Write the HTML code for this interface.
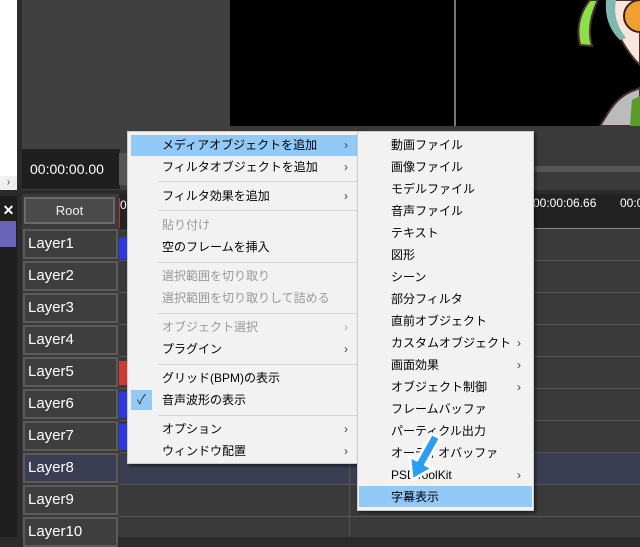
<!DOCTYPE html>
<html><head><meta charset="utf-8"><style>
*{margin:0;padding:0;box-sizing:border-box}
body{width:640px;height:537px;overflow:hidden;background:#2b2b2b;position:relative;font-family:"Liberation Sans","Noto Sans CJK JP",sans-serif}
.a{position:absolute}
.lay{position:absolute;left:23px;width:95px;height:30px;background:#3e3e3e;border:2px solid #5a5a5a;color:#fff;font-size:15px;line-height:26px;padding-left:3px}
.hl{position:absolute;left:119px;width:521px;height:1px;background:#555}
.m{position:absolute;background:#f2f2f2;border:1px solid #ccc;box-shadow:2px 2px 3px rgba(0,0,0,.5);font-size:12px;color:#000}
.it{position:absolute;height:22px;line-height:22px;white-space:nowrap}
.dis{color:#999}
.ar{position:absolute;font-size:12px;line-height:22px;color:#444}
.sep{position:absolute;height:1px;background:#d5d5d5}
</style></head><body>
<div class="a" style="left:0;top:0;width:17px;height:176px;background:#fff"></div>
<div class="a" style="left:0;top:176px;width:17px;height:14px;background:#f0f0f0;font-size:10px;color:#444;text-align:center;line-height:14px">›</div>
<div class="a" style="left:0;top:196px;width:17px;height:341px;background:#1e1e1e"></div>
<div class="a" style="left:0;top:200px;width:17px;height:20px;color:#fff;font-size:14px;font-weight:bold;line-height:20px;text-align:center">✕</div>
<div class="a" style="left:0;top:221px;width:16px;height:26px;background:#6a64b8"></div>
<div class="a" style="left:22px;top:0;width:208px;height:190px;background:#404040"></div>
<div class="a" style="left:230px;top:0;width:410px;height:126px;background:#000"></div>
<div class="a" style="left:454px;top:0;width:2px;height:126px;background:#777"></div>
<svg class="a" style="left:560px;top:0" width="80" height="126">
<path d="M30 0 Q14 20 20 45 L32 46 Q26 25 38 0Z" fill="#8ee04a" stroke="#4a3030" stroke-width="2"/>
<path d="M52 0 Q50 30 75 60 L80 65 L80 0Z" fill="#f8e6dc" stroke="#4a3030" stroke-width="2"/>
<path d="M46 0 Q44 25 60 40 L66 38 Q52 20 56 0Z" fill="#7fb8b0"/>
<circle cx="80" cy="16" r="16" fill="#f0a030" stroke="#3a2020" stroke-width="2"/>
<path d="M50 110 Q60 95 75 90 L80 88 L80 126 L40 126Z" fill="#bbb" stroke="#4a3030" stroke-width="2"/>
<path d="M72 100 L80 96 L80 126 L70 126Z" fill="#5a9a2a"/>
</svg>
<div class="a" style="left:230px;top:126px;width:410px;height:64px;background:#3a3a3a"></div>
<div class="a" style="left:533px;top:166px;width:107px;height:6px;background:#555"></div>
<div class="a" style="left:22px;top:149px;width:98px;height:40px;background:#1f1f1f;color:#fff;font-size:14px;line-height:40px;padding-left:8px">00:00:00.00</div>
<div class="a" style="left:119px;top:153px;width:12px;height:32px;background:#555"></div>
<div class="a" style="left:22px;top:194px;width:618px;height:343px;background:#3a3a3a"></div>
<div class="a" style="left:119px;top:194px;width:521px;height:35px;background:#222"></div>
<div class="a" style="left:533px;top:196px;color:#fff;font-size:12px">00:00:06.66</div>
<div class="a" style="left:620px;top:196px;color:#fff;font-size:12px">00:0</div>
<div class="a" style="left:533px;top:228px;width:107px;height:1px;background:#888"></div>
<div class="a" style="left:119px;top:198px;width:1px;height:30px;background:#c03030"></div>
<div class="a" style="left:120px;top:198px;color:#fff;font-size:12px">0</div>
<div class="a" style="left:24px;top:197px;width:91px;height:27px;background:#4a4a4a;border:2px solid #6a6a6a;color:#eee;font-size:13px;text-align:center;line-height:23px">Root</div>
<div class="a" style="left:119px;top:453px;width:521px;height:32px;background:#3b3e52"></div>
<div class="lay" style="top:229px">Layer1</div>
<div class="lay" style="top:261px">Layer2</div>
<div class="lay" style="top:293px">Layer3</div>
<div class="lay" style="top:325px">Layer4</div>
<div class="lay" style="top:357px">Layer5</div>
<div class="lay" style="top:389px">Layer6</div>
<div class="lay" style="top:421px">Layer7</div>
<div class="lay" style="top:453px;background:#3b3e52">Layer8</div>
<div class="lay" style="top:485px">Layer9</div>
<div class="lay" style="top:517px">Layer10</div>
<div class="hl" style="top:260px"></div><div class="hl" style="top:292px"></div><div class="hl" style="top:324px"></div><div class="hl" style="top:356px"></div><div class="hl" style="top:388px"></div><div class="hl" style="top:420px"></div><div class="hl" style="top:452px"></div><div class="hl" style="top:484px"></div><div class="hl" style="top:516px"></div>
<div class="a" style="left:349px;top:464px;width:1px;height:73px;background:#555"></div>
<div class="a" style="left:119px;top:237px;width:10px;height:22px;background:#2a3ae0"></div>
<div class="a" style="left:119px;top:361px;width:10px;height:24px;background:#d03a30"></div>
<div class="a" style="left:119px;top:392px;width:10px;height:26px;background:#2a3ae0"></div>
<div class="a" style="left:119px;top:424px;width:10px;height:26px;background:#2a3ae0"></div>
<div class="m" style="left:127px;top:131px;width:239px;height:333px">
<div class="a" style="left:3px;top:3px;width:228px;height:21px;background:#91c9f7"></div>
<div class="a" style="left:3px;top:258px;width:21px;height:20px;background:#91c9f7;text-align:center;line-height:20px;color:#333;font-size:13px">✓</div>
<div class="it" style="left:34px;top:2px">メディアオブジェクトを追加</div><div class="ar" style="left:216px;top:2px">›</div>
<div class="it" style="left:34px;top:24px">フィルタオブジェクトを追加</div><div class="ar" style="left:216px;top:24px">›</div>
<div class="sep" style="left:30px;top:49px;width:200px"></div>
<div class="it" style="left:34px;top:53px">フィルタ効果を追加</div><div class="ar" style="left:216px;top:53px">›</div>
<div class="sep" style="left:30px;top:78px;width:200px"></div>
<div class="it dis" style="left:34px;top:82px">貼り付け</div>
<div class="it" style="left:34px;top:104px">空のフレームを挿入</div>
<div class="sep" style="left:30px;top:130px;width:200px"></div>
<div class="it dis" style="left:34px;top:133px">選択範囲を切り取り</div>
<div class="it dis" style="left:34px;top:155px">選択範囲を切り取りして詰める</div>
<div class="sep" style="left:30px;top:181px;width:200px"></div>
<div class="it dis" style="left:34px;top:184px">オブジェクト選択</div><div class="ar dis" style="left:216px;top:184px;color:#aaa">›</div>
<div class="it" style="left:34px;top:206px">プラグイン</div><div class="ar" style="left:216px;top:206px">›</div>
<div class="sep" style="left:30px;top:232px;width:200px"></div>
<div class="it" style="left:34px;top:235px">グリッド(BPM)の表示</div>
<div class="it" style="left:34px;top:257px">音声波形の表示</div>
<div class="sep" style="left:30px;top:283px;width:200px"></div>
<div class="it" style="left:34px;top:286px">オプション</div><div class="ar" style="left:216px;top:286px">›</div>
<div class="it" style="left:34px;top:308px">ウィンドウ配置</div><div class="ar" style="left:216px;top:308px">›</div>
</div>
<div class="m" style="left:357px;top:131px;width:177px;height:380px">
<div class="a" style="left:1px;top:354px;width:173px;height:21px;background:#91c9f7"></div>
<div class="it" style="left:33px;top:2px">動画ファイル</div>
<div class="it" style="left:33px;top:24px">画像ファイル</div>
<div class="it" style="left:33px;top:46px">モデルファイル</div>
<div class="it" style="left:33px;top:68px">音声ファイル</div>
<div class="it" style="left:33px;top:90px">テキスト</div>
<div class="it" style="left:33px;top:112px">図形</div>
<div class="it" style="left:33px;top:134px">シーン</div>
<div class="it" style="left:33px;top:156px">部分フィルタ</div>
<div class="it" style="left:33px;top:178px">直前オブジェクト</div>
<div class="it" style="left:33px;top:200px">カスタムオブジェクト</div><div class="ar" style="left:159px;top:200px">›</div>
<div class="it" style="left:33px;top:222px">画面効果</div><div class="ar" style="left:159px;top:222px">›</div>
<div class="it" style="left:33px;top:244px">オブジェクト制御</div><div class="ar" style="left:159px;top:244px">›</div>
<div class="it" style="left:33px;top:266px">フレームバッファ</div>
<div class="it" style="left:33px;top:288px">パーティクル出力</div>
<div class="it" style="left:33px;top:310px">オーディオバッファ</div>
<div class="it" style="left:33px;top:332px">PSDToolKit</div><div class="ar" style="left:159px;top:332px">›</div>
<div class="it" style="left:33px;top:354px">字幕表示</div>
</div>
<svg class="a" style="left:400px;top:432px" width="50" height="60">
<path d="M12 48 L32.6 36.4 L25.6 32.7 L40.4 6.3 L31.6 1.7 L16.8 28.1 L9.8 24.4 Z" fill="#2a9df4" stroke="#fff" stroke-width="3" stroke-linejoin="round"/>
</svg>
</body></html>
